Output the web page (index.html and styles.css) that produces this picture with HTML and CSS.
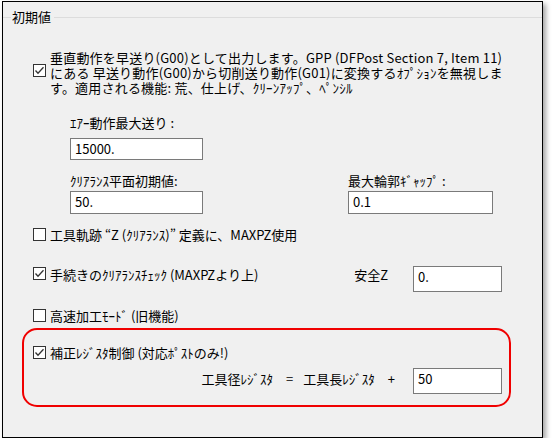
FILE: index.html
```html
<!DOCTYPE html>
<html lang="ja">
<head>
<meta charset="utf-8">
<link rel="stylesheet" href="styles.css">
</head>
<body>
<div class="frame">
  <div class="legend"><span class="legend-text">初期値</span></div>

  <div class="check-block">
    <span class="cb cb-top"><svg width="13" height="13" viewBox="0 0 13 13"><rect x="0.5" y="0.5" width="12" height="12" fill="#fff" stroke="#333"/><polyline points="2.5,6.5 5,9.2 10.5,3.2" fill="none" stroke="#333" stroke-width="1.3"/></svg></span>
    <div class="multi">垂直動作を早送り(G00)として出力します。GPP (DFPost Section 7, Item 11)<br>にある 早送り動作(G00)から切削送り動作(G01)に変換するｵﾌﾟｼｮﾝを無視しま<br>す。適用される機能: 荒、仕上げ、ｸﾘｰﾝｱｯﾌﾟ、ﾍﾟﾝｼﾙ</div>
  </div>

  <div class="fields">
    <div class="lbl lbl-air">ｴｱｰ動作最大送り :</div>
    <div class="input in-air">15000.</div>
    <div class="lbl lbl-row2 col1">ｸﾘｱﾗﾝｽ平面初期値:</div>
    <div class="lbl lbl-row2 col2">最大輪郭ｷﾞｬｯﾌﾟ :</div>
    <div class="input in-row2 in-row2-left">50.</div>
    <div class="input in-row2 in-row2-right">0.1</div>
  </div>

  <div class="check-row row-tool">
    <span class="cb"><svg width="13" height="13" viewBox="0 0 13 13"><rect x="0.5" y="0.5" width="12" height="12" fill="#fff" stroke="#333"/></svg></span>
    <span class="txt">工具軌跡 “Z (ｸﾘｱﾗﾝｽ)” 定義に、MAXPZ使用</span>
  </div>

  <div class="check-row row-proc">
    <span class="cb cb-proc"><svg width="13" height="13" viewBox="0 0 13 13"><rect x="0.5" y="0.5" width="12" height="12" fill="#fff" stroke="#333"/><polyline points="2.5,6.5 5,9.2 10.5,3.2" fill="none" stroke="#333" stroke-width="1.3"/></svg></span>
    <span class="txt txt-proc">手続きのｸﾘｱﾗﾝｽﾁｪｯｸ (MAXPZより上)</span>
    <span class="txt safe-lbl">安全Z</span>
    <div class="input in-safe">0.</div>
  </div>

  <div class="check-row row-hs">
    <span class="cb"><svg width="13" height="13" viewBox="0 0 13 13"><rect x="0.5" y="0.5" width="12" height="12" fill="#fff" stroke="#333"/></svg></span>
    <span class="txt">高速加工ﾓｰﾄﾞ (旧機能)</span>
  </div>

  <div class="highlight">
    <div class="check-row row-reg">
      <span class="cb"><svg width="13" height="13" viewBox="0 0 13 13"><rect x="0.5" y="0.5" width="12" height="12" fill="#fff" stroke="#333"/><polyline points="2.5,6.5 5,9.2 10.5,3.2" fill="none" stroke="#333" stroke-width="1.3"/></svg></span>
      <span class="txt">補正ﾚｼﾞｽﾀ制御 (対応ﾎﾟｽﾄのみ!)</span>
    </div>
    <div class="formula">
      <span class="txt">工具径ﾚｼﾞｽﾀ</span>
      <span class="txt op-eq">=</span>
      <span class="txt">工具長ﾚｼﾞｽﾀ</span>
      <span class="txt op-plus">+</span>
      <div class="input in-formula">50</div>
    </div>
  </div>
</div>
</body>
</html>
```

FILE: styles.css
```css
* { box-sizing: border-box; }

html, body {
  margin: 0;
  padding: 0;
  background: #ffffff;
}

body {
  font-family: "MS UI Gothic", "Noto Sans CJK JP", sans-serif;
  font-size: 13px;
  line-height: 15px;
  color: #000;
}

.frame {
  margin: 1px 0 0 2px;
  width: 541px;
  height: 437px;
  border: 1px solid #000;
  background: #f0f0f0;
  box-shadow: 3px 3px 5px rgba(0, 0, 0, 0.35);
}

.legend {
  display: flex;
  align-items: center;
  height: 16px;
  margin-top: 7px;
  line-height: 16px;
}

.legend::before {
  content: "";
  width: 8px;
  height: 1px;
  background: #dcdcdc;
}

.legend::after {
  content: "";
  flex: 1;
  height: 1px;
  background: #dcdcdc;
}

.legend-text {
  padding: 0 3px 0 1px;
}

.cb {
  display: block;
  width: 13px;
  height: 13px;
  flex: none;
}

.cb svg { display: block; }

.check-block {
  display: flex;
  align-items: flex-start;
  margin-top: 25px;
  padding-left: 30px;
}

.cb-top { margin-top: 14px; margin-right: 4px; }

.multi {
  white-space: nowrap;
  letter-spacing: 0.2px;
}

.fields {
  display: grid;
  grid-template-columns: 278px 1fr;
  padding-left: 67px;
  margin-top: 20px;
}

.lbl-air { grid-column: 1; grid-row: 1; }

.input {
  height: 22px;
  border: 1px solid #7a7a7a;
  background: #fff;
  padding: 2px 4px 0;
  line-height: 15px;
}

.in-air {
  grid-column: 1;
  grid-row: 2;
  width: 133px;
  margin-top: 8px;
}

.lbl-row2 { grid-row: 3; margin-top: 13px; }
.col1 { grid-column: 1; }
.col2 { grid-column: 2; }

.in-row2 { grid-row: 4; margin-top: 3px; height: 23px; }
.in-row2-left { grid-column: 1; width: 133px; }
.in-row2-right { grid-column: 2; width: 145px; }

.check-row {
  display: flex;
  align-items: center;
  padding-left: 30px;
}

.check-row .cb { margin-right: 4px; }

.txt { white-space: nowrap; }

.row-tool { margin-top: 13px; }

.row-proc {
  margin-top: 24px;
  align-items: flex-start;
}

.cb-proc { margin-top: 1px; }

.txt-proc { margin-top: 1px; }

.safe-lbl {
  margin-left: auto;
  margin-top: 1px;
}

.in-safe {
  width: 89px;
  height: 26px;
  margin-left: 25px;
  margin-right: 40px;
}

.row-hs { margin-top: 16px; }

.highlight {
  margin: 5px 0 0 19px;
  width: 489px;
  height: 79px;
  border: 2px solid #f00000;
  border-radius: 15px;
  padding-top: 15px;
}

.row-reg { padding-left: 9px; }

.formula {
  display: flex;
  align-items: flex-start;
  justify-content: flex-end;
  margin-top: 8px;
  padding-right: 7px;
}

.formula .txt { margin-top: 3px; }

.op-eq { margin: 0 10px 0 13px; }

.op-plus { margin: 0 18px 0 13px; }

.in-formula {
  width: 89px;
  height: 26px;
}
```
